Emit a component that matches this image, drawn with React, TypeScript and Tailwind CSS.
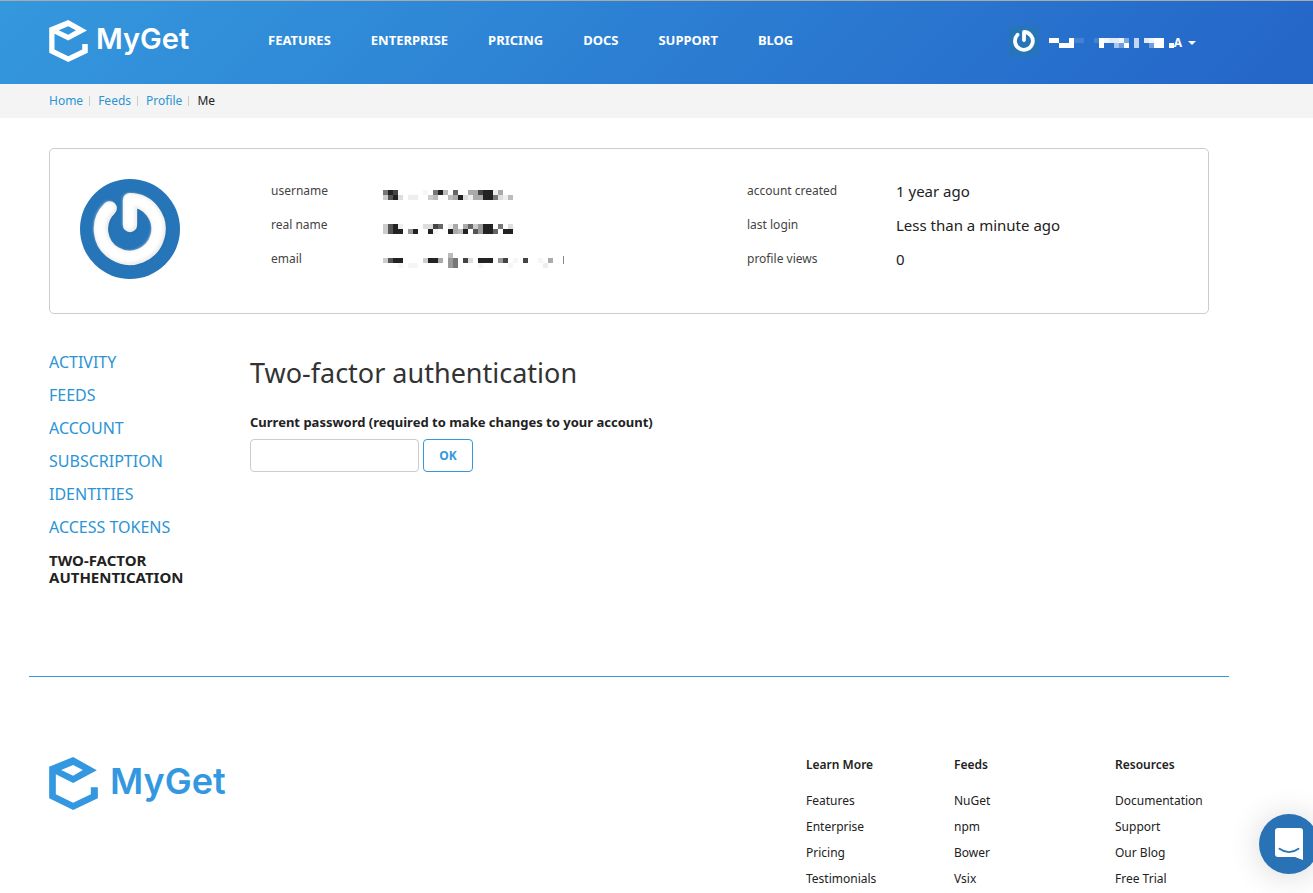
import React from "react";

const navItems = ["FEATURES", "ENTERPRISE", "PRICING", "DOCS", "SUPPORT", "BLOG"];

const sideItems = ["ACTIVITY", "FEEDS", "ACCOUNT", "SUBSCRIPTION", "IDENTITIES", "ACCESS TOKENS"];

const footerColumns = [
  { title: "Learn More", links: ["Features", "Enterprise", "Pricing", "Testimonials"] },
  { title: "Feeds", links: ["NuGet", "npm", "Bower", "Vsix"] },
  { title: "Resources", links: ["Documentation", "Support", "Our Blog", "Free Trial"] },
];

// Each character is one 5px cell; a hex digit gives its grey level, a dot leaves it empty.
const usernameCells = ["", "724.....f.72b.6..aa422ea..", "c52d.ee..cb..ba2deaa227deb"];
const realNameCells = ["", "c52e....dd46.ea.a6c922.7.d", "c522.92..2f..2ab2.59226.22"];
const emailCells = [
  ".............b",
  "c522....c22a.97.4d.222.94.f.4..f.a",
  "...f.ff......97....f.....f......e",
];
// In the header the digit is the opacity of a white cell.
const accountCells = ["ff..f22..2fedde6.b.deff", "..fff.....f..95f.b..5ff.f"];

function Mosaic({ rows, inverted }: { rows: string[]; inverted?: boolean }) {
  const width = Math.max(...rows.map((r) => r.length)) * 5;
  const height = rows.length * 5;
  return (
    <svg width={width} height={height} aria-hidden="true" className="block">
      {rows.map((row, y) =>
        row.split("").map((cell, x) =>
          cell === "." ? null : (
            <rect
              key={`${x}-${y}`}
              x={x * 5}
              y={y * 5}
              width={5}
              height={5}
              fill={inverted ? "#fff" : cell === "f" ? "#f6f6f6" : `#${cell}${cell}${cell}`}
              fillOpacity={inverted ? parseInt(cell, 16) / 15 : 1}
            />
          )
        )
      )}
    </svg>
  );
}

function LogoMark({ className }: { className: string }) {
  return (
    <svg viewBox="0 0 146 159" className={className} fill="currentColor" aria-hidden="true">
      <path
        fillRule="evenodd"
        d="M0 29 72 0 143 40 72 78 20 52V112L72 137 125 112V91H146V124L72 159 0 124ZM36 39 72 56 101 39 72 24Z"
      />
    </svg>
  );
}

const powerPath = "M29.7 29.3A28.8 28.8 0 1 0 50 21.2V46";

function Avatar() {
  return (
    <svg viewBox="0 0 100 100" className="size-[100px]" role="img" aria-label="Avatar">
      <defs>
        <filter id="soft" x="-20%" y="-20%" width="140%" height="140%">
          <feGaussianBlur stdDeviation="1.6" />
        </filter>
      </defs>
      <circle cx="50" cy="50" r="50" fill="#2675b8" />
      <g fill="none" strokeLinecap="round" strokeLinejoin="round">
        <path d={powerPath} stroke="#1f5f98" strokeOpacity="0.5" strokeWidth="14.5" filter="url(#soft)" />
        <path d={powerPath} stroke="#ededed" strokeWidth="14.3" />
        <path d={powerPath} stroke="#fff" strokeWidth="11" filter="url(#soft)" transform="translate(-1 -1)" />
      </g>
    </svg>
  );
}

function SmallAvatar() {
  return (
    <svg viewBox="0 0 30 30" className="size-[30px]" aria-hidden="true">
      <rect width="30" height="30" rx="4" fill="#2675b8" />
      <path
        d="M8.5 8.7A8.9 8.9 0 1 0 15 6V14"
        fill="none"
        stroke="#fff"
        strokeWidth="3.8"
        strokeLinecap="round"
        strokeLinejoin="round"
      />
    </svg>
  );
}

function Detail({ label, children }: { label: string; children: React.ReactNode }) {
  return (
    <div className="flex h-[34px] items-center">
      <dt className="w-[112px] shrink-0 text-xs text-[#444]">{label}</dt>
      <dd className="pt-[2px]">{children}</dd>
    </div>
  );
}

function Stat({ label, value }: { label: string; value: string }) {
  return (
    <div className="flex h-[34px] items-center">
      <dt className="w-[149px] shrink-0 text-xs text-[#444]">{label}</dt>
      <dd className="text-[15px]">{value}</dd>
    </div>
  );
}

export default function App() {
  return (
    <div className="min-h-screen overflow-x-hidden bg-white font-['Noto_Sans',sans-serif] text-[#222]">
      <header className="border-t border-[#aaa] bg-linear-[135deg,#3498dd,#2465c8]">
        <div className="ml-[29px] flex h-[83px] max-w-[1200px] items-center px-5 pb-[3px]">
          <a href="#home" className="flex w-[219px] shrink-0 items-center gap-2 text-white">
            <LogoMark className="h-[42px] w-[39px]" />
            <span className="pb-1 font-['Inter',sans-serif] text-[29px] leading-9 font-semibold">MyGet</span>
          </a>
          <nav className="flex gap-10 text-[13px] font-bold text-white">
            {navItems.map((item) => (
              <a key={item} href={`#${item.toLowerCase()}`}>
                {item}
              </a>
            ))}
          </nav>
          <button type="button" className="mr-[13px] ml-auto flex items-center text-xs font-bold text-white" aria-label="Account menu">
            <SmallAvatar />
            <span className="flex items-center pt-1 pl-[10px]">
              <Mosaic rows={accountCells} inverted />
              <span>A</span>
              <svg viewBox="0 0 8 4" className="ml-[6px] h-1 w-2" fill="currentColor" aria-hidden="true">
                <path d="M0 0H8L4 4Z" />
              </svg>
            </span>
          </button>
        </div>
      </header>

      <nav aria-label="Breadcrumb" className="bg-[#f4f4f4]">
        <ol className="ml-[29px] flex h-[34px] items-center px-5 text-xs text-[#2a94d6]">
          {["Home", "Feeds", "Profile"].map((item) => (
            <li key={item} className="flex items-center">
              <a href={`#${item.toLowerCase()}`}>{item}</a>
              <span className="mr-2 ml-[6px] h-[10px] w-px bg-[#ccc]" />
            </li>
          ))}
          <li className="text-[#222]" aria-current="page">
            Me
          </li>
        </ol>
      </nav>

      <div className="ml-[29px] max-w-[1200px]">
        <div className="px-5 pt-[30px]">
          <section className="flex h-[166px] rounded-[5px] border border-[#ccc] px-[30px] pt-[30px]">
            <Avatar />
            <dl className="-mt-[5px] ml-[91px] w-[476px]">
              <Detail label="username">
                <Mosaic rows={usernameCells} />
              </Detail>
              <Detail label="real name">
                <Mosaic rows={realNameCells} />
              </Detail>
              <Detail label="email">
                <span className="flex items-center gap-[10px]">
                  <Mosaic rows={emailCells} />
                  <span className="h-2 w-px bg-[#888]" />
                </span>
              </Detail>
            </dl>
            <dl className="-mt-[5px]">
              <Stat label="account created" value="1 year ago" />
              <Stat label="last login" value="Less than a minute ago" />
              <Stat label="profile views" value="0" />
            </dl>
          </section>

          <div className="flex h-[362px] pt-10">
            <nav aria-label="Profile" className="w-[201px] shrink-0">
              <ul className="flex flex-col gap-4 text-base leading-[17px] text-[#2a94d6]">
                {sideItems.map((item) => (
                  <li key={item}>
                    <a href={`#${item.toLowerCase().replace(" ", "-")}`}>{item}</a>
                  </li>
                ))}
                <li className="w-[150px] text-[15px] leading-[17px] font-bold text-[#222]">
                  <a href="#two-factor" aria-current="page">
                    TWO-FACTOR AUTHENTICATION
                  </a>
                </li>
              </ul>
            </nav>
            <main>
              <h1 className="text-[27px] leading-[38px] text-[#333]">Two-factor authentication</h1>
              <form className="mt-5" onSubmit={(e) => e.preventDefault()}>
                <label htmlFor="password" className="block text-[13px] leading-5 font-bold">
                  Current password (required to make changes to your account)
                </label>
                <div className="mt-[7px] flex gap-1">
                  <input
                    id="password"
                    type="password"
                    className="h-[33px] w-[169px] rounded-[4px] border border-[#ccc] px-2 text-sm"
                  />
                  <button
                    type="submit"
                    className="h-[33px] w-[50px] rounded-[4px] border border-[#3498db] text-xs font-bold text-[#3498db]"
                  >
                    OK
                  </button>
                </div>
              </form>
            </main>
          </div>
        </div>

        <footer className="flex items-start border-t border-[#3498db] px-5 pt-20 text-xs">
          <a href="#home" className="flex items-center gap-3 text-[#3498e0]">
            <LogoMark className="h-[53px] w-[49px]" />
            <span className="pb-[6px] font-['Inter',sans-serif] text-4xl font-semibold">MyGet</span>
          </a>
          <div className="ml-auto grid w-[403px] grid-cols-[148px_161px_auto]">
            {footerColumns.map((column) => (
              <section key={column.title}>
                <h2 className="mb-[15px] leading-4 font-semibold">{column.title}</h2>
                <ul className="leading-[26px]">
                  {column.links.map((link) => (
                    <li key={link}>
                      <a href={`#${link.toLowerCase().replace(" ", "-")}`}>{link}</a>
                    </li>
                  ))}
                </ul>
              </section>
            ))}
          </div>
        </footer>
      </div>

      <button
        type="button"
        aria-label="Open chat"
        className="fixed -right-[6px] bottom-[19px] flex size-[60px] items-center justify-center rounded-full bg-[#2872b5] shadow-[0_2px_32px_rgba(0,0,0,0.16)]"
      >
        <svg viewBox="0 0 28 32" className="h-8 w-7" aria-hidden="true">
          <path d="M3 0H25Q28 0 28 3V32Q25 31 20 29H3Q0 29 0 26V3Q0 0 3 0Z" fill="#fff" />
          <path d="M4.5 20.8Q14 27.5 23.5 20.8" fill="none" stroke="#2872b5" strokeWidth="1.8" strokeLinecap="round" />
        </svg>
      </button>
    </div>
  );
}
